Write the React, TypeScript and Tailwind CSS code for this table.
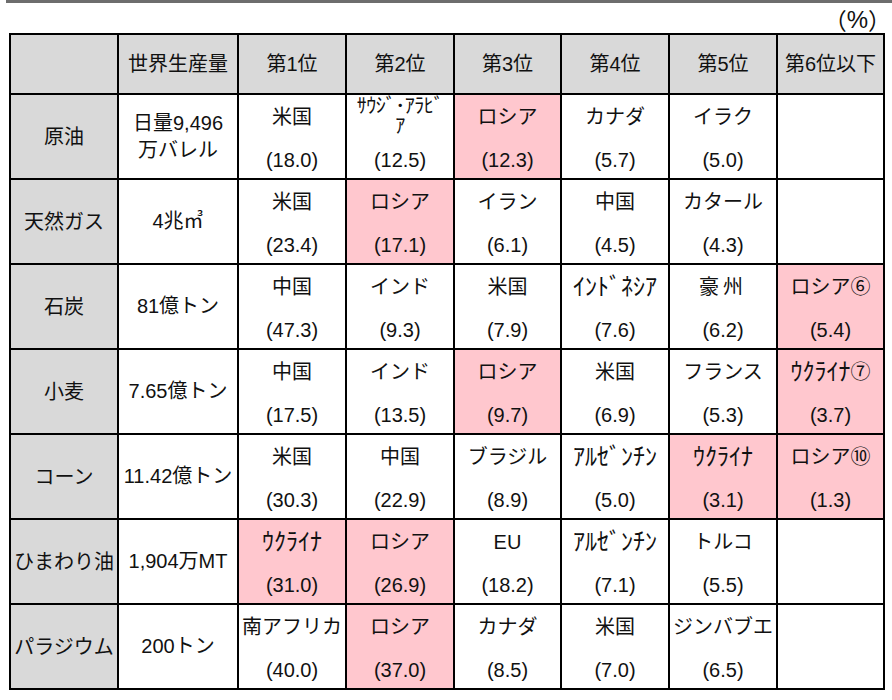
import React from "react";

type Cell = { name: string; val: string; pink?: boolean; half?: boolean; saudi?: boolean; wide?: boolean } | null;
type Row = { label: string; prod: string[]; cells: Cell[] };

const rows: Row[] = [
  {
    label: "原油",
    prod: ["日量9,496", "万バレル"],
    cells: [
      { name: "米国", val: "(18.0)" },
      { name: "ｻｳｼﾞ･ｱﾗﾋﾞ", val: "(12.5)", saudi: true },
      { name: "ロシア", val: "(12.3)", pink: true },
      { name: "カナダ", val: "(5.7)" },
      { name: "イラク", val: "(5.0)" },
      null,
    ],
  },
  {
    label: "天然ガス",
    prod: ["4兆㎥"],
    cells: [
      { name: "米国", val: "(23.4)" },
      { name: "ロシア", val: "(17.1)", pink: true },
      { name: "イラン", val: "(6.1)" },
      { name: "中国", val: "(4.5)" },
      { name: "カタール", val: "(4.3)" },
      null,
    ],
  },
  {
    label: "石炭",
    prod: ["81億トン"],
    cells: [
      { name: "中国", val: "(47.3)" },
      { name: "インド", val: "(9.3)" },
      { name: "米国", val: "(7.9)" },
      { name: "ｲﾝﾄﾞﾈｼｱ", val: "(7.6)", half: true },
      { name: "豪州", val: "(6.2)", wide: true },
      { name: "ロシア⑥", val: "(5.4)", pink: true },
    ],
  },
  {
    label: "小麦",
    prod: ["7.65億トン"],
    cells: [
      { name: "中国", val: "(17.5)" },
      { name: "インド", val: "(13.5)" },
      { name: "ロシア", val: "(9.7)", pink: true },
      { name: "米国", val: "(6.9)" },
      { name: "フランス", val: "(5.3)" },
      { name: "ｳｸﾗｲﾅ⑦", val: "(3.7)", pink: true, half: true },
    ],
  },
  {
    label: "コーン",
    prod: ["11.42億トン"],
    cells: [
      { name: "米国", val: "(30.3)" },
      { name: "中国", val: "(22.9)" },
      { name: "ブラジル", val: "(8.9)" },
      { name: "ｱﾙｾﾞﾝﾁﾝ", val: "(5.0)", half: true },
      { name: "ｳｸﾗｲﾅ", val: "(3.1)", pink: true, half: true },
      { name: "ロシア⑩", val: "(1.3)", pink: true },
    ],
  },
  {
    label: "ひまわり油",
    prod: ["1,904万MT"],
    cells: [
      { name: "ｳｸﾗｲﾅ", val: "(31.0)", pink: true, half: true },
      { name: "ロシア", val: "(26.9)", pink: true },
      { name: "EU", val: "(18.2)" },
      { name: "ｱﾙｾﾞﾝﾁﾝ", val: "(7.1)", half: true },
      { name: "トルコ", val: "(5.5)" },
      null,
    ],
  },
  {
    label: "パラジウム",
    prod: ["200トン"],
    cells: [
      { name: "南アフリカ", val: "(40.0)" },
      { name: "ロシア", val: "(37.0)", pink: true },
      { name: "カナダ", val: "(8.5)" },
      { name: "米国", val: "(7.0)" },
      { name: "ジンバブエ", val: "(6.5)" },
      null,
    ],
  },
];

const headers = ["", "世界生産量", "第1位", "第2位", "第3位", "第4位", "第5位", "第6位以下"];

function Name({ text, half }: { text: string; half?: boolean }) {
  if (!half) return <>{text}</>;
  const m = text.match(/^(.*?)([⑥⑦⑩]?)$/);
  const main = m ? m[1] : text;
  const circ = m ? m[2] : "";
  return (
    <>
      <span className="text-[24px]">{main}</span>
      {circ && <span>{circ}</span>}
    </>
  );
}

function DataCell({ c }: { c: Cell }) {
  if (!c) return <div className="bg-white" />;
  return (
    <div className={`flex flex-col overflow-hidden ${c.pink ? "bg-[#ffc7ce]" : "bg-white"}`}>
      {c.saudi ? (
        <div className="h-[44px] flex flex-col items-center pt-[1px]">
          <div className="text-center text-[20px] tracking-[-0.5px] leading-[20px] whitespace-nowrap">
            <div>{c.name}</div>
            <div>ｱ</div>
          </div>
        </div>
      ) : (
        <div
          className={`h-[44px] flex items-center justify-center whitespace-nowrap leading-[20px] ${
            c.wide ? "tracking-[4px]" : ""
          }`}
        >
          <Name text={c.name} half={c.half} />
        </div>
      )}
      <div className="pt-[11px] leading-[20px] text-center">{c.val}</div>
    </div>
  );
}

export default function App() {
  return (
    <div className="w-[892px] h-[700px] bg-white text-[#111] text-[20px] font-['Liberation_Sans','Noto_Sans_CJK_JP',sans-serif]">
      <div className="ml-[6px] h-[3px] bg-[#6d6d6d]" />
      <div className="h-[30px] flex justify-end items-center pr-[1px] pt-[4px] leading-[24px]">
        <span className="text-[23px] font-['Noto_Sans_CJK_JP',sans-serif]">（</span>
        <span className="text-[24px]">%</span>
        <span className="text-[23px] font-['Noto_Sans_CJK_JP',sans-serif]">）</span>
      </div>
      <div className="ml-[9px] w-fit grid grid-cols-[106px_118px_106px_106px_105px_106px_106px_105px] grid-rows-[58px_repeat(7,83px)] gap-[2px] p-[2px] bg-black">
        {headers.map((h, i) => (
          <div key={i} className="bg-[#d9d9d9] flex items-center justify-center whitespace-nowrap leading-[20px]">
            {h}
          </div>
        ))}
        {rows.map((r) => (
          <React.Fragment key={r.label}>
            <div className="bg-[#d9d9d9] flex items-center justify-center whitespace-nowrap leading-[20px]">
              {r.label}
            </div>
            <div className="bg-white flex flex-col items-center justify-center whitespace-nowrap leading-[27px]">
              {r.prod.map((p) => (
                <div key={p}>{p}</div>
              ))}
            </div>
            {r.cells.map((c, i) => (
              <DataCell key={i} c={c} />
            ))}
          </React.Fragment>
        ))}
      </div>
    </div>
  );
}
